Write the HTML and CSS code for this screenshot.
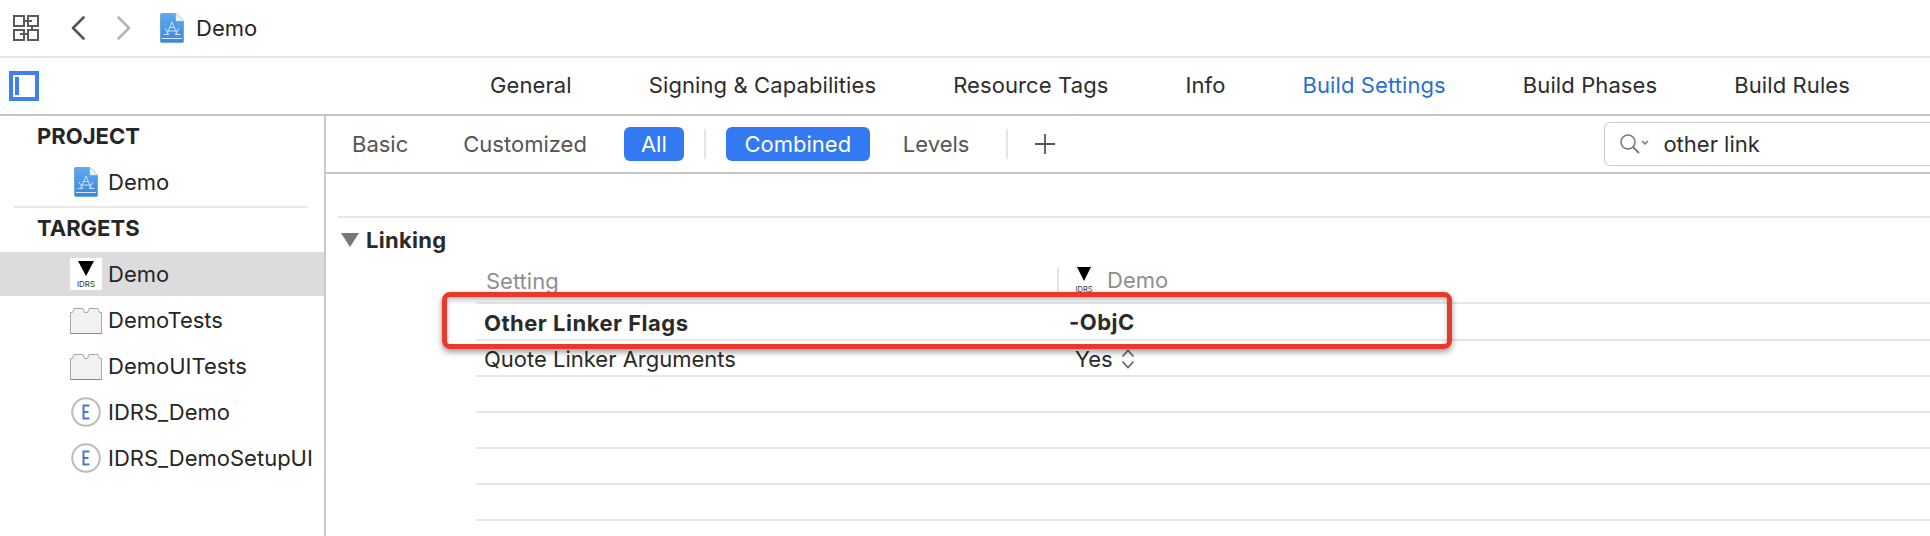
FILE: index.html
```html
<!DOCTYPE html>
<html lang="en">
<head>
<meta charset="utf-8">
<title>Demo - Build Settings</title>
<link rel="stylesheet" href="styles.css">
</head>
<body>
<svg class="defs" width="0" height="0" aria-hidden="true">
  <defs>
    <linearGradient id="docfill" x1="0" y1="0" x2="0" y2="1">
      <stop offset="0" stop-color="#5fa9ee"/>
      <stop offset="1" stop-color="#3b86dc"/>
    </linearGradient>
  </defs>
  <symbol id="appdoc" viewBox="0 0 24 30">
    <path d="M1.5 0.5H16L23.5 8V28.5a1 1 0 0 1-1 1H1.5a1 1 0 0 1-1-1V1.5a1 1 0 0 1 1-1z" fill="url(#docfill)" stroke="#6fa8e0" stroke-width="1"/>
    <path d="M16 0.5V8H23.5z" fill="#eef3f9" stroke="#c9d9ea" stroke-width=".5"/>
    <path d="M2 25.500H22" stroke="#d5e8fa" stroke-width="1"/>
    <path d="M12 9L6.500 22M12 9L17.500 22M7 18H17M3.500 21.500H8M16 21.500H20.500M9.500 14.500H14.500M5 15L9 22M19 15L15 22" fill="none" stroke="#d6e8fa" stroke-width=".9"/>
  </symbol>
  <symbol id="target" viewBox="0 0 32 27">
    <path d="M0.5 26.500V5.500H2.500L4 1.500H13L14.500 5.500H17.500L19 1.500H28L29.500 5.500H31.500V26.500z" fill="#f1f1f2" stroke="#a8a8a8" stroke-width="1"/>
    <path d="M0.500 26.500H31.500" stroke="#8a8a8a" stroke-width="1"/>
  </symbol>
  <symbol id="ext" viewBox="0 0 30 30">
    <circle cx="15" cy="15" r="13.800" fill="#fff" stroke="#bcbcbc" stroke-width="2"/>
    <path d="M18.500 8.500H12.500V21.500H18.500M12.500 15H17.500" fill="none" stroke="#4a76c9" stroke-width="2"/>
  </symbol>
</svg>

<header class="topbar">
  <svg class="grid-icon" width="26" height="26" viewBox="0 0 26 26" aria-hidden="true">
    <path d="M1 1H11V11H1zM15 1H25V11H15zM1 15H11V25H1zM15 15H25V25H15zM11 6H19M7 19H15M19 11V15" fill="none" stroke="#5a5a5a" stroke-width="2"/>
  </svg>
  <svg class="chev-back" width="14" height="24" viewBox="0 0 14 24" aria-hidden="true"><path d="M12.500 1.500L2 12L12.500 22.500" fill="none" stroke="#555" stroke-width="2.600" stroke-linecap="round" stroke-linejoin="round"/></svg>
  <svg class="chev-fwd" width="14" height="24" viewBox="0 0 14 24" aria-hidden="true"><path d="M1.500 1.500L12 12L1.500 22.500" fill="none" stroke="#b4b4b4" stroke-width="2.600" stroke-linecap="round" stroke-linejoin="round"/></svg>
  <svg class="doc-icon" width="24" height="30" aria-hidden="true"><use href="#appdoc"/></svg>
  <span class="crumb">Demo</span>
</header>

<nav class="tabbar">
  <span class="panel-toggle"><span class="panel-bar"></span></span>
  <div class="tabs">
    <span class="tab">General</span>
    <span class="tab">Signing &amp; Capabilities</span>
    <span class="tab">Resource Tags</span>
    <span class="tab">Info</span>
    <span class="tab tab-active">Build Settings</span>
    <span class="tab">Build Phases</span>
    <span class="tab">Build Rules</span>
  </div>
</nav>

<main class="main">
  <aside class="sidebar">
    <div class="side-head">PROJECT</div>
    <div class="side-row project-row"><svg class="side-doc" width="24" height="30" aria-hidden="true"><use href="#appdoc"/></svg><span>Demo</span></div>
    <div class="side-rule"></div>
    <div class="side-head targets-head">TARGETS</div>
    <div class="side-row selected">
      <svg class="idrs-box" width="32" height="32" viewBox="0 0 32 32" aria-hidden="true">
        <path d="M8 3H24L16 18z" fill="#000"/>
        <text x="16" y="28.500" text-anchor="middle" font-family="Inter, sans-serif" font-size="8" fill="#333">IDRS</text>
      </svg>
      <span>Demo</span>
    </div>
    <div class="side-row"><svg class="side-icon" width="32" height="27" aria-hidden="true"><use href="#target"/></svg><span>DemoTests</span></div>
    <div class="side-row"><svg class="side-icon" width="32" height="27" aria-hidden="true"><use href="#target"/></svg><span>DemoUITests</span></div>
    <div class="side-row"><svg class="side-ext" width="30" height="30" aria-hidden="true"><use href="#ext"/></svg><span>IDRS_Demo</span></div>
    <div class="side-row"><svg class="side-ext" width="30" height="30" aria-hidden="true"><use href="#ext"/></svg><span>IDRS_DemoSetupUI</span></div>
  </aside>

  <section class="content">
    <div class="subbar">
      <span class="seg seg-basic">Basic</span>
      <span class="seg seg-custom">Customized</span>
      <span class="pill pill-all">All</span>
      <span class="vsep sep-one"></span>
      <span class="pill pill-combined">Combined</span>
      <span class="seg seg-levels">Levels</span>
      <span class="vsep sep-two"></span>
      <svg class="plus" width="22" height="22" viewBox="0 0 22 22" aria-hidden="true"><path d="M11 1V21M1 11H21" stroke="#555" stroke-width="1.800"/></svg>
      <div class="search">
        <svg class="search-icon" width="32" height="22" viewBox="0 0 32 22" aria-hidden="true">
          <circle cx="9" cy="9" r="7" fill="none" stroke="#777" stroke-width="1.500"/>
          <path d="M14 14L20 20" stroke="#777" stroke-width="1.800"/>
          <path d="M23 8L26 11L29 8" fill="none" stroke="#777" stroke-width="1.500"/>
        </svg>
        <span class="search-text">other link</span>
      </div>
    </div>

    <div class="settings">
      <div class="section-rule"></div>
      <div class="section-title"><span class="tri"></span><span>Linking</span></div>
      <div class="table">
        <div class="thead">
          <span class="cell-name head-text">Setting</span>
          <span class="head-value">
            <svg class="head-idrs" width="22" height="26" viewBox="0 0 22 26" aria-hidden="true">
              <path d="M4 0H18L11 14z" fill="#000"/>
              <text x="11" y="24.500" text-anchor="middle" font-family="Inter, sans-serif" font-size="7.500" fill="#333">IDRS</text>
            </svg>
            <span class="head-text">Demo</span>
          </span>
        </div>
        <div class="row row-bold"><span class="cell-name">Other Linker Flags</span><span class="cell-value cell-objc">-ObjC</span></div>
        <div class="row"><span class="cell-name">Quote Linker Arguments</span><span class="cell-value">Yes
          <svg class="stepper" width="14" height="20" viewBox="0 0 14 20" aria-hidden="true"><path d="M1.500 7.500L7 1.500L12.500 7.500M1.500 12.500L7 18.500L12.500 12.500" fill="none" stroke="#666" stroke-width="1.700"/></svg></span></div>
        <div class="row"></div>
        <div class="row"></div>
        <div class="row"></div>
        <div class="row"></div>
      </div>
    </div>
    <div class="callout"></div>
  </section>
</main>
</body>
</html>
```

FILE: styles.css
```css
* { box-sizing: border-box; }
html, body { margin: 0; padding: 0; }
body {
  width: 1930px;
  height: 536px;
  overflow: hidden;
  background: #fff;
  color: #262626;
  font-family: Inter, "Liberation Sans", sans-serif;
  font-size: 22px;
  line-height: 26px;
}
.defs { position: absolute; }

.topbar {
  height: 58px;
  border-bottom: 2px solid #e6e6e6;
  display: flex;
  align-items: center;
}
.grid-icon { margin-left: 13px; }
.chev-back { margin-left: 32px; }
.chev-fwd { margin-left: 32px; }
.doc-icon { margin-left: 29px; }
.crumb { margin-left: 12px; }

.tabbar {
  height: 58px;
  border-bottom: 2px solid #c6c6c6;
  display: flex;
  align-items: center;
}
.panel-toggle {
  width: 30px;
  height: 30px;
  margin-left: 9px;
  border: 4px solid #3f80ee;
  display: flex;
  align-items: center;
  padding-left: 2px;
}
.panel-bar { width: 4px; height: 18px; background: #3f80ee; }
.tabs {
  margin-left: 451px;
  display: flex;
  gap: 77px;
  margin-top: -2px;
}
.tab { color: #2c2c2c; letter-spacing: .1px; }
.tab-active { color: #2a6fd0; }

.main { display: flex; height: 420px; }
.sidebar {
  width: 326px;
  flex: none;
  border-right: 2px solid #c9c9c9;
}
.side-head {
  font-weight: 700;
  padding-left: 37px;
  height: 40px;
  line-height: 40px;
}
.side-row {
  height: 46px;
  display: flex;
  align-items: center;
  padding-left: 70px;
  padding-top: 2px;
  gap: 6px;
}
.project-row { height: 50px; padding-left: 74px; gap: 10px; }
.side-rule { height: 2px; margin: 0 16px 0 14px; background: #e8e8e8; }
.targets-head { height: 44px; line-height: 40px; }
.selected { background: #dcdcde; height: 44px; padding-top: 0; }
.idrs-box { background: #fff; flex: none; }
.side-ext { margin-left: 1px; margin-right: 1px; }

.content { flex: 1; min-width: 0; position: relative; }
.subbar {
  height: 58px;
  border-bottom: 2px solid #c6c6c6;
  display: flex;
  align-items: center;
  color: #555;
}
.seg-basic { margin-left: 26px; }
.seg-custom { margin-left: 55px; }
.pill {
  height: 34px;
  line-height: 34px;
  background: #3379f2;
  color: #fff;
  border-radius: 6px;
  text-align: center;
}
.pill-all { width: 60px; margin-left: 37px; }
.vsep { width: 2px; height: 30px; background: #e6e6e6; }
.sep-one { margin-left: 20px; }
.pill-combined { width: 144px; margin-left: 20px; }
.seg-levels { margin-left: 33px; }
.sep-two { margin-left: 37px; }
.plus { margin-left: 26px; }
.search {
  margin-left: 548px;
  flex: 1;
  margin-right: -10px;
  height: 44px;
  border: 1px solid #c8c8c8;
  border-radius: 6px;
  display: flex;
  align-items: center;
  color: #2c2c2c;
}
.search-icon { margin-left: 14px; }
.search-text { margin-left: 12px; }

.settings { padding-top: 42px; }
.section-rule { height: 2px; margin-left: 12px; background: #e6e6e6; }
.section-title {
  height: 44px;
  display: flex;
  align-items: center;
  margin-left: 15px;
  gap: 7px;
  font-weight: 700;
  color: #2a2a2a;
  letter-spacing: .3px;
}
.tri {
  width: 0;
  height: 0;
  border-left: 9px solid transparent;
  border-right: 9px solid transparent;
  border-top: 14px solid #777;
}
.table { margin-left: 150px; }
.thead {
  height: 42px;
  display: flex;
  align-items: center;
  border-bottom: 2px solid #e6e6e6;
}
.head-text { color: #8f8f8f; }
.cell-name { width: 581px; padding-left: 8px; flex: none; }
.thead .cell-name { padding-left: 10px; padding-bottom: 2px; width: 579px; margin-left: 2px; padding-left: 8px; }
.head-value {
  display: flex;
  align-items: center;
  gap: 12px;
  height: 26px;
  margin-top: -4px;
  border-left: 2px solid #e6e6e6;
  padding-left: 14px;
}
.row {
  height: 36px;
  display: flex;
  align-items: center;
  padding-top: 2px;
  border-bottom: 2px solid #e6e6e6;
  color: #2a2a2a;
}
.row-bold { font-weight: 700; height: 37.400px; letter-spacing: .5px; padding-top: 3px; }
.cell-value { padding-left: 18px; display: flex; align-items: center; gap: 8px; }
.cell-objc { padding-left: 12px; padding-bottom: 2px; }
.callout {
  position: absolute;
  left: 116px;
  top: 176px;
  width: 1010px;
  height: 57px;
  border: 5px solid #e8392a;
  border-radius: 8px;
  box-shadow: 0 3px 6px rgba(0, 0, 0, .4), inset 0 3px 5px rgba(0, 0, 0, .25);
}
```
